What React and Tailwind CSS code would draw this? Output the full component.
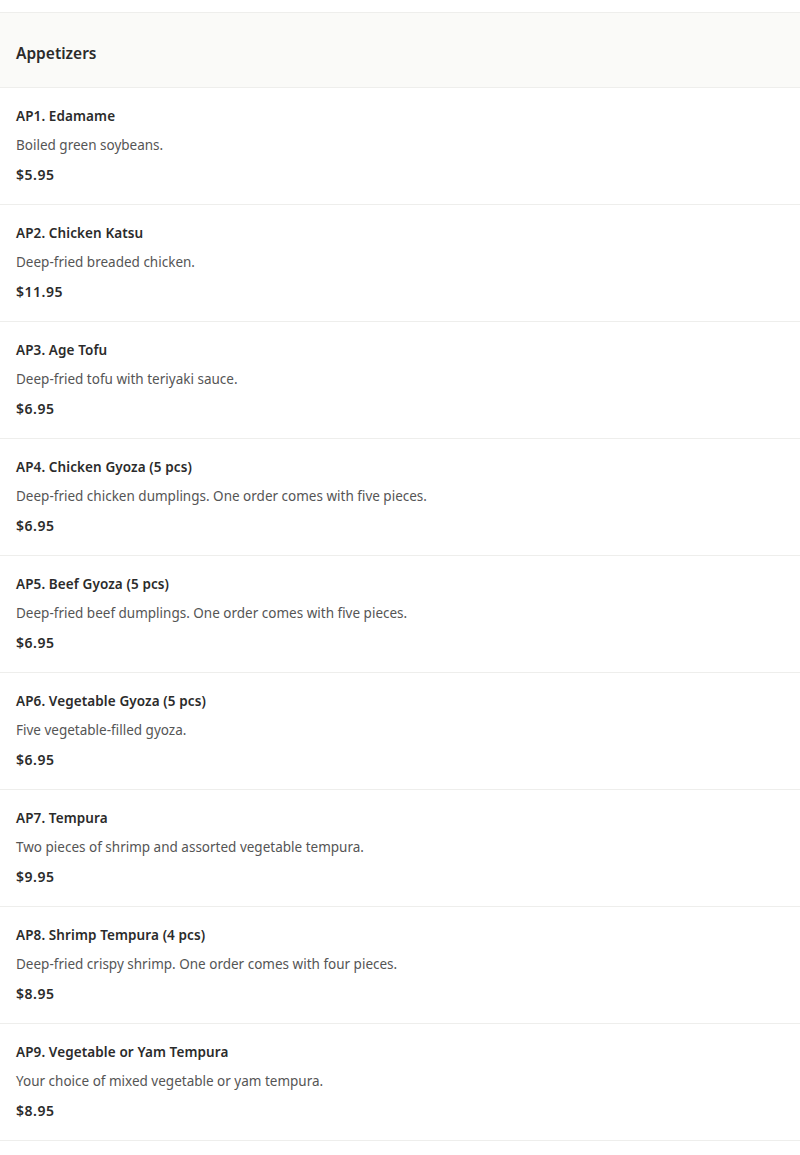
const items = [
  { name: "AP1. Edamame", desc: "Boiled green soybeans.", price: "$5.95" },
  { name: "AP2. Chicken Katsu", desc: "Deep-fried breaded chicken.", price: "$11.95" },
  { name: "AP3. Age Tofu", desc: "Deep-fried tofu with teriyaki sauce.", price: "$6.95" },
  {
    name: "AP4. Chicken Gyoza (5 pcs)",
    desc: "Deep-fried chicken dumplings. One order comes with five pieces.",
    price: "$6.95",
  },
  {
    name: "AP5. Beef Gyoza (5 pcs)",
    desc: "Deep-fried beef dumplings. One order comes with five pieces.",
    price: "$6.95",
  },
  { name: "AP6. Vegetable Gyoza (5 pcs)", desc: "Five vegetable-filled gyoza.", price: "$6.95" },
  {
    name: "AP7. Tempura",
    desc: "Two pieces of shrimp and assorted vegetable tempura.",
    price: "$9.95",
  },
  {
    name: "AP8. Shrimp Tempura (4 pcs)",
    desc: "Deep-fried crispy shrimp. One order comes with four pieces.",
    price: "$8.95",
  },
  {
    name: "AP9. Vegetable or Yam Tempura",
    desc: "Your choice of mixed vegetable or yam tempura.",
    price: "$8.95",
  },
];

export default function App() {
  return (
    <main
      className="min-h-screen bg-white pt-3 text-[#2b2b2b]"
      style={{ fontFamily: '"Noto Sans", "Open Sans", sans-serif' }}
    >
      {/* Category header */}
      <div className="flex h-[76px] items-center border-y border-[#eeeeec] bg-[#fafaf8] px-4 pt-2">
        <h2 className="text-[15.5px] font-semibold">Appetizers</h2>
      </div>

      {/* Menu items */}
      <div>
        {items.map((item) => (
          <div key={item.name} className="border-b border-[#eeeeec] px-4 pt-5 pb-[21px]">
            <h3 className="text-[13.5px] leading-4 font-semibold tracking-[0.1px]">{item.name}</h3>
            <p className="mt-[13px] text-[13.5px] leading-4 text-[#555555]">{item.desc}</p>
            <p className="mt-[14px] text-[14px] leading-4 font-semibold tracking-[0.5px]">{item.price}</p>
          </div>
        ))}
      </div>
    </main>
  );
}
